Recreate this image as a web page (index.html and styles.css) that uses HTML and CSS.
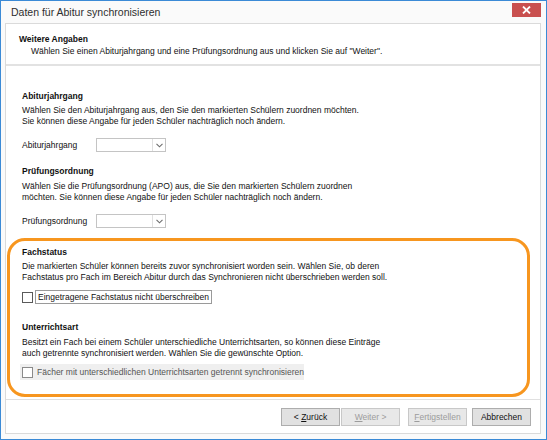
FILE: index.html
```html
<!DOCTYPE html>
<html lang="de">
<head>
    <meta charset="UTF-8">
    <title>Daten für Abitur synchronisieren</title>
    <link rel="stylesheet" href="styles.css">
</head>
<body>
    <div class="window">
        <div class="titlebar">
            <span class="title">Daten für Abitur synchronisieren</span>
            <span class="close">
                <svg width="9" height="8" viewBox="0 0 9 8"><path d="M1 0.5 L8 7.5 M8 0.5 L1 7.5" stroke="#fff" stroke-width="1.8"/></svg>
            </span>
        </div>

        <div class="panel">
            <div class="wizard-head">
                <div class="head-title">Weitere Angaben</div>
                <div class="head-sub">Wählen Sie einen Abiturjahrgang und eine Prüfungsordnung aus und klicken Sie auf "Weiter".</div>
            </div>

            <div class="wizard-body">
                <div class="section">
                    <h2>Abiturjahrgang</h2>
                    <p>Wählen Sie den Abiturjahrgang aus, den Sie den markierten Schülern zuordnen möchten.<br>Sie können diese Angabe für jeden Schüler nachträglich noch ändern.</p>
                    <div class="field">
                        <label>Abiturjahrgang</label>
                        <div class="combo">
                            <span class="combo-btn"><svg width="7" height="5" viewBox="0 0 7 5"><path d="M0.5 0.8 L3.5 3.8 L6.5 0.8" fill="none" stroke="#6d6d6d" stroke-width="1.1"/></svg></span>
                        </div>
                    </div>
                </div>

                <div class="section second">
                    <h2>Prüfungsordnung</h2>
                    <p>Wählen Sie die Prüfungsordnung (APO) aus, die Sie den markierten Schülern zuordnen<br>möchten. Sie können diese Angabe für jeden Schüler nachträglich noch ändern.</p>
                    <div class="field">
                        <label>Prüfungsordnung</label>
                        <div class="combo">
                            <span class="combo-btn"><svg width="7" height="5" viewBox="0 0 7 5"><path d="M0.5 0.8 L3.5 3.8 L6.5 0.8" fill="none" stroke="#6d6d6d" stroke-width="1.1"/></svg></span>
                        </div>
                    </div>
                </div>

                <div class="highlight">
                    <div class="section">
                        <h2>Fachstatus</h2>
                        <p>Die markierten Schüler können bereits zuvor synchronisiert worden sein. Wählen Sie, ob deren<br>Fachstatus pro Fach im Bereich Abitur durch das Synchronieren nicht überschrieben werden soll.</p>
                        <div class="check focused">
                            <span class="box"></span>
                            <span class="check-label">Eingetragene Fachstatus nicht überschreiben</span>
                        </div>
                    </div>

                    <div class="section second-hl">
                        <h2>Unterrichtsart</h2>
                        <p>Besitzt ein Fach bei einem Schüler unterschiedliche Unterrichtsarten, so können diese Einträge<br>auch getrennte synchronisiert werden. Wählen Sie die gewünschte Option.</p>
                        <div class="check hover">
                            <span class="box"></span>
                            <span class="check-label">Fächer mit unterschiedlichen Unterrichtsarten getrennt synchronisieren</span>
                        </div>
                    </div>
                </div>
            </div>

            <div class="wizard-foot">
                <button class="btn">&lt; <u>Z</u>urück</button>
                <button class="btn btn-next" disabled><u>W</u>eiter &gt;</button>
                <button class="btn btn-finish" disabled><u>F</u>ertigstellen</button>
                <button class="btn btn-cancel">Abbrechen</button>
            </div>
        </div>
    </div>
</body>
</html>
```

FILE: styles.css
```css
body {
    margin: 0;
    background: #ffffff;
    font-family: "Liberation Sans", Arial, sans-serif;
    font-size: 8.5px;
    color: #111;
}

.window {
    width: 547px;
    height: 440px;
    box-sizing: border-box;
    border: 1px solid #3b8ad6;
    background: #fafafa;
    display: flex;
    flex-direction: column;
}

/* title bar */
.titlebar {
    height: 22px;
    flex: none;
    display: flex;
    align-items: center;
    justify-content: space-between;
}

.title {
    margin-left: 10px;
    margin-top: -1px;
    font-size: 10.5px;
    color: #2e2e2e;
}

.close {
    width: 29px;
    height: 14px;
    margin-right: 5px;
    margin-top: -5px;
    background: #c9504f;
    display: flex;
    align-items: center;
    justify-content: center;
}

/* white wizard page */
.panel {
    flex: 1;
    margin: 0 5px 5px 4px;
    border: 1px solid #dadada;
    background: #fff;
    display: flex;
    flex-direction: column;
}

.wizard-head {
    padding: 10px 0 7px 13px;
    border-bottom: 2px solid #e2e2e2;
    line-height: 11px;
}

.head-title {
    font-weight: bold;
}

.head-sub {
    margin-top: 1px;
    padding-left: 12px;
}

.wizard-body {
    flex: 1;
    padding: 25px 16px 0 16px;
}

h2 {
    margin: 0;
    font-size: 8.5px;
    line-height: 11px;
    font-weight: bold;
}

p {
    margin: 3px 0 0 0;
    line-height: 11px;
    white-space: nowrap;
}

.second {
    margin-top: 14px;
}

.second p {
    margin-top: 4px;
}

.field {
    margin-top: 11px;
    display: flex;
    align-items: center;
}

.field label {
    width: 74px;
}

.combo {
    width: 70px;
    height: 14px;
    box-sizing: border-box;
    border: 1px solid #c4c4c4;
    background: #fff;
    display: flex;
    justify-content: flex-end;
}

.combo-btn {
    width: 12px;
    border-left: 1px solid #e0e0e0;
    display: flex;
    align-items: center;
    justify-content: center;
}

/* orange marker round the last two options */
.highlight {
    margin: 10px -6px 0 -15px;
    padding: 6px 0 14px 12px;
    border: 3px solid #f7961f;
    border-radius: 18px;
}

.second-hl {
    margin-top: 18px;
}

.second-hl p {
    margin-top: 4px;
}

.check {
    display: flex;
    align-items: center;
}

.box {
    width: 11px;
    height: 11px;
    box-sizing: border-box;
    border: 1px solid #5a5a5a;
    background: #fff;
    margin-right: 2px;
}

.check.focused {
    margin-top: 7px;
    height: 14px;
}

.check.focused .check-label {
    border: 1px solid #9a9a9a;
    padding: 0 2px;
    line-height: 12px;
}

.check.hover {
    margin: 5px 0 0 -2px;
    width: 284px;
    height: 16px;
    padding-left: 2px;
    box-sizing: border-box;
    background: #efefef;
    color: #555;
}

.check.hover .box {
    border-color: #8a8a8a;
    margin-right: 4px;
}

/* button row */
.wizard-foot {
    border-top: 1px solid #e0e0e0;
    padding: 8px 9px 7px 0;
    display: flex;
    justify-content: flex-end;
}

.btn {
    width: 59px;
    height: 18px;
    padding: 0;
    font-family: "Liberation Sans", Arial, sans-serif;
    font-size: 8.5px;
    color: #111;
    background: #e1e1e1;
    border: 1px solid #adadad;
}

.btn:disabled {
    color: #9c9c9c;
    background: #e8e8e8;
    border-color: #c8c8c8;
}

.btn-next {
    margin-left: 1px;
}

.btn-finish {
    margin-left: 8px;
}

.btn-cancel {
    margin-left: 5px;
}
```
